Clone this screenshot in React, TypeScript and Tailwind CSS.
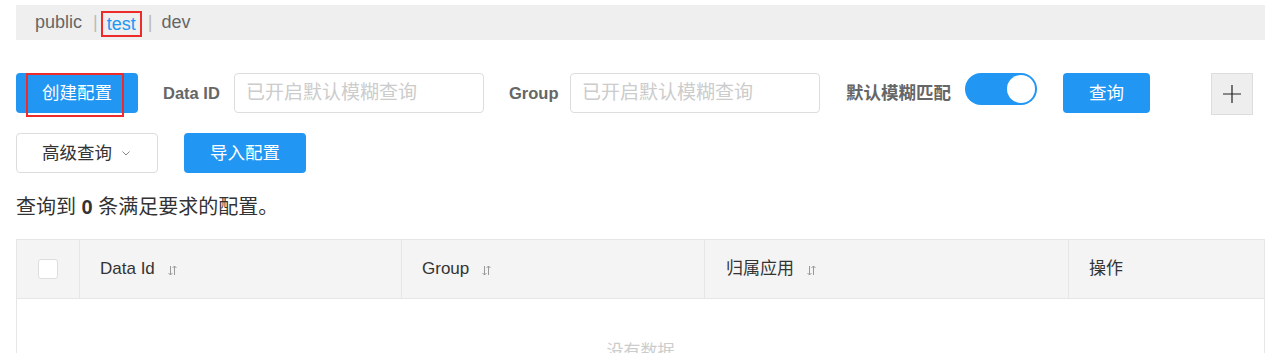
import React from "react";

const font = { fontFamily: '"Liberation Sans", "Noto Sans CJK SC", sans-serif' };

function SortIcon() {
  return (
    <svg width="9" height="11" viewBox="0 0 9 11" className="ml-[13px] mt-[3px]" fill="none" stroke="#999" strokeWidth="1">
      <path d="M2.5 1 V10 M0.5 8 L2.5 10 L4.5 8" />
      <path d="M6.5 10 V1 M4.5 3 L6.5 1 L8.5 3" />
    </svg>
  );
}

export default function App() {
  return (
    <div className="w-[1282px] h-[353px] bg-white overflow-hidden" style={font}>
      <div className="ml-4 w-[1249px]">
        {/* namespace bar */}
        <div className="mt-[5px] h-[35px] bg-[#efefef] flex items-center pl-[19px] text-[18px] text-[#666]">
          <span>public</span>
          <span className="ml-[11px] text-[#bbb]">|</span>
          <span className="ml-[3px] mt-[3px] h-[26px] inline-flex items-center px-[4px] border-2 border-[#ee2b2b] text-[#2196f3]">
            test
          </span>
          <span className="ml-[6px] text-[#bbb]">|</span>
          <span className="ml-[9px]">dev</span>
        </div>

        {/* row 1 */}
        <div className="mt-[33px] flex items-center h-[40px]">
          <div className="relative">
            <button className="w-[122px] h-[40px] rounded-[4px] bg-[#2196f3] text-white text-[17.5px]">创建配置</button>
            <span className="absolute left-[10px] top-0 w-[98px] h-[44px] border-2 border-[#ee2b2b]" />
          </div>
          <span className="ml-[25px] w-[56px] whitespace-nowrap text-[16.5px] font-bold text-[#666]">Data ID</span>
          <div className="ml-[15px] w-[250px] h-[40px] border border-[#ddd] rounded-[4px] flex items-center pl-[11px] text-[19px] text-[#ccc]">
            已开启默认模糊查询
          </div>
          <span className="ml-[25px] w-[47px] whitespace-nowrap text-[16.5px] font-bold text-[#666]">Group</span>
          <div className="ml-[14px] w-[250px] h-[40px] border border-[#ddd] rounded-[4px] flex items-center pl-[11px] text-[19px] text-[#ccc]">
            已开启默认模糊查询
          </div>
          <span className="ml-[26px] w-[105px] whitespace-nowrap text-[17.5px] font-bold text-[#666]">默认模糊匹配</span>
          <div className="ml-[14px] self-start w-[72px] h-[32px] rounded-full bg-[#2196f3] relative">
            <span className="absolute right-[2px] top-[2px] w-[28px] h-[28px] rounded-full bg-white" />
          </div>
          <button className="ml-[26px] w-[87px] h-[40px] rounded-[4px] bg-[#2196f3] text-white text-[17.5px]">查询</button>
          <div className="ml-[61px] self-start w-[42px] h-[42px] bg-[#eee] border border-[#ddd] flex items-center justify-center">
            <svg width="20" height="20" viewBox="0 0 20 20" stroke="#222" strokeWidth="1.2">
              <path d="M10 1 V19 M1 10 H19" />
            </svg>
          </div>
        </div>

        {/* row 2 */}
        <div className="mt-[20px] flex items-center h-[40px]">
          <button className="w-[142px] h-[40px] rounded-[4px] border border-[#ddd] bg-white text-[#333] text-[17.5px] flex items-center pl-[25px]">
            高级查询
            <svg width="8" height="5" viewBox="0 0 8 5" className="ml-[10px]" fill="none" stroke="#888" strokeWidth="1">
              <path d="M0.5 0.5 L4 4 L7.5 0.5" />
            </svg>
          </button>
          <button className="ml-[26px] w-[122px] h-[40px] rounded-[4px] bg-[#2196f3] text-white text-[17.5px]">导入配置</button>
        </div>

        {/* count */}
        <div className="mt-[22px] text-[20px] text-[#333] leading-[24px]">
          查询到 <b>0</b> 条满足要求的配置。
        </div>

        {/* table */}
        <div className="mt-[20px] border border-[#e6e6e6]">
          <div className="flex h-[59px] bg-[#f4f4f4] border-b border-[#e6e6e6] text-[17px] text-[#333]">
            <div className="w-[63px] border-r border-[#e6e6e6] flex items-center justify-center">
              <span className="w-[20px] h-[20px] rounded-[3px] border border-[#ddd] bg-white" />
            </div>
            <div className="w-[322px] border-r border-[#e6e6e6] flex items-center pl-[20px]">
              Data Id <SortIcon />
            </div>
            <div className="w-[303px] border-r border-[#e6e6e6] flex items-center pl-[20px]">
              Group <SortIcon />
            </div>
            <div className="w-[364px] border-r border-[#e6e6e6] flex items-center pl-[21px]">
              归属应用 <SortIcon />
            </div>
            <div className="flex-1 flex items-center pl-[20px]">操作</div>
          </div>
          <div className="h-[100px] flex justify-center pt-[40px] text-[17px] text-[#ccc]">没有数据</div>
        </div>
      </div>
    </div>
  );
}
